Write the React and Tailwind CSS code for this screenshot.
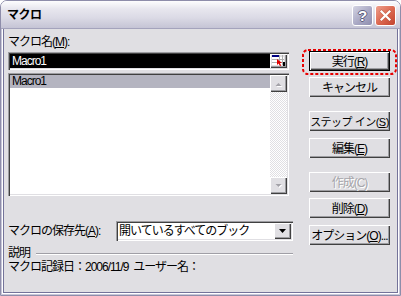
import React from "react";

const raised =
  "shadow-[inset_1px_1px_0_#ffffff,inset_-1px_-1px_0_#404040,inset_-2px_-2px_0_#9d9da1]";
const sunken =
  "shadow-[inset_1px_1px_0_#9d9da1,inset_2px_2px_0_#404040,inset_-1px_-1px_0_#ffffff,inset_-2px_-2px_0_#e0dfe3]";

function Btn({ children, disabled, className = "" }) {
  return (
    <div
      className={`h-[20px] w-[81px] flex items-center justify-center whitespace-nowrap bg-[#e0dfe3] ${raised} ${className} ${
        disabled ? "text-[#a6a5aa] [text-shadow:1px_1px_0_#ffffff]" : "text-black"
      }`}
    >
      <span className="leading-[14px] pt-[1px] whitespace-pre">{children}</span>
    </div>
  );
}

function U({ children }) {
  return <span className="underline underline-offset-[1px] decoration-1">{children}</span>;
}

function ArrowBtn({ dir }) {
  return (
    <div className={`w-[17px] h-[17px] bg-[#e0dfe3] flex items-center justify-center ${raised}`}>
      <svg width="9" height="6" viewBox="0 0 9 6">
        {dir === "up" ? (
          <>
            <polygon points="1.5,5 4.5,2 7.5,5" fill="#ffffff" transform="translate(1,1)" />
            <polygon points="1.5,5 4.5,2 7.5,5" fill="#a3a2a8" />
          </>
        ) : (
          <>
            <polygon points="1.5,1 4.5,4 7.5,1" fill="#ffffff" transform="translate(1,1)" />
            <polygon points="1.5,1 4.5,4 7.5,1" fill="#a3a2a8" />
          </>
        )}
      </svg>
    </div>
  );
}

export default function App() {
  return (
    <div className="w-[401px] h-[296px] bg-white">
      <div className="w-[401px] h-[296px] flex flex-col rounded-t-[7px] overflow-hidden border border-[#8e8daa] text-[12px] tracking-[-1px] font-['Liberation_Sans','Noto_Sans_CJK_JP',sans-serif] text-black">
        {/* Title bar */}
        <div className="h-[28px] shrink-0 flex items-center pl-[6px] pr-[4px] bg-[linear-gradient(#fdfdfe,#e7e6ee_30%,#dcdbe6_60%,#c5c4d5)] border-b border-[#a4a3bc]">
          <span className="font-bold text-[12px] tracking-[-0.5px] leading-[14px] pt-[1px]">マクロ</span>
          <div className="ml-auto flex gap-[2px] pt-[1px]">
            <div className="w-[21px] h-[21px] rounded-[3px] border border-white bg-[linear-gradient(135deg,#d4d4e3,#a9a8c4_55%,#8f8eaf)] flex items-center justify-center">
              <span className="font-bold text-[15px] leading-none text-white tracking-normal font-['Liberation_Sans',sans-serif] [text-shadow:1px_0_0_#5d5c7c,-1px_0_0_#5d5c7c,0_1px_0_#5d5c7c,0_-1px_0_#5d5c7c]">
                ?
              </span>
            </div>
            <div className="w-[21px] h-[21px] rounded-[3px] border border-white bg-[linear-gradient(135deg,#eea08d,#dd6a52_50%,#c2432e)] flex items-center justify-center">
              <svg width="13" height="13" viewBox="0 0 13 13">
                <path d="M2.5 2.5 L10.5 10.5 M10.5 2.5 L2.5 10.5" stroke="#8a3a2e" strokeWidth="3.2" strokeLinecap="square" opacity="0.35" />
                <path d="M2.5 2.5 L10.5 10.5 M10.5 2.5 L2.5 10.5" stroke="#ffffff" strokeWidth="2.2" strokeLinecap="square" />
              </svg>
            </div>
          </div>
        </div>

        {/* Body frame */}
        <div className="flex-1 flex border-x border-b border-[#c8c7d9]">
          <div className="flex-1 flex border-x border-b border-white">
            <div className="flex-1 flex border-x border-b border-[#74739a] bg-[#e0dfe3] pl-[4px]">
              {/* Left column */}
              <div className="w-[285px] flex flex-col pt-[6px]">
                <div className="leading-[14px] h-[14px]">
                  マクロ名(<U>M</U>):
                </div>
                {/* Text box */}
                <div className={`mt-[3px] w-[281px] h-[18px] bg-white p-[2px] flex ${sunken}`}>
                  <div className="w-[260px] h-[14px] bg-black text-white leading-[14px] pl-[2px]">Macro1</div>
                  <div className={`ml-auto w-[17px] h-[14px] bg-[#e0dfe3] flex items-center justify-center ${raised}`}>
                    <svg width="13" height="11" viewBox="0 0 13 11" className="mb-[1px]">
                      <rect x="0" y="0" width="7" height="2" fill="#000080" />
                      <rect x="0" y="2" width="12" height="8" fill="#ffffff" />
                      <path d="M0 4.5h12M0 7.5h12M7.5 0v10M10.5 0v10" stroke="#b0b0b0" strokeWidth="1" />
                      <polygon points="5,4 5,10 6.6,8.6 8,11 9.2,10.4 7.9,8 10,8" fill="#e00000" />
                      <rect x="11" y="7" width="2" height="4" fill="#000000" />
                    </svg>
                  </div>
                </div>
                {/* List box */}
                <div className={`mt-[3px] w-[281px] h-[123px] bg-white p-[2px] flex ${sunken}`}>
                  <div className="flex-1">
                    <div className="h-[13px] bg-[#b4b4c0] leading-[13px] pl-[2px]">Macro1</div>
                  </div>
                  <div className="w-[17px] flex flex-col">
                    <ArrowBtn dir="up" />
                    <div className="flex-1 bg-[conic-gradient(#ffffff_25%,#e0dfe3_0_50%,#ffffff_0_75%,#e0dfe3_0)] bg-[length:2px_2px]" />
                    <ArrowBtn dir="down" />
                  </div>
                </div>
                {/* Save location */}
                <div className="mt-[25px] flex items-center">
                  <div className="w-[108px] leading-[14px] whitespace-nowrap">
                    マクロの保存先(<U>A</U>):
                  </div>
                  <div className={`w-[177px] h-[20px] bg-white p-[2px] flex items-center ${sunken}`}>
                    <div className="flex-1 leading-[14px] pl-[1px] whitespace-nowrap">開いているすべてのブック</div>
                    <div className={`w-[17px] h-[16px] bg-[#e0dfe3] flex items-center justify-center ${raised}`}>
                      <svg width="7" height="4" viewBox="0 0 7 4">
                        <polygon points="0,0 7,0 3.5,4" fill="#000000" />
                      </svg>
                    </div>
                  </div>
                </div>
                {/* Description */}
                <div className="mt-[5px] flex items-center h-[14px]">
                  <span className="leading-[14px]">説明</span>
                  <div className="ml-[6px] flex-1 h-[2px] border-t border-[#a09fa6] border-b border-b-white mt-[1px]" />
                </div>
                <div className="leading-[14px] whitespace-pre">マクロ記録日：2006/11/9  ユーザー名：</div>
              </div>

              {/* Right column */}
              <div className="ml-[16px] w-[81px] flex flex-col pt-[22px]">
                <div className="relative">
                  <svg className="absolute left-[-7px] top-[-2px]" width="95" height="26" viewBox="0 0 95 26">
                    <rect x="1" y="1" width="93" height="24" rx="5" ry="5" fill="none" stroke="#e80000" strokeWidth="2" strokeDasharray="3 2" />
                  </svg>
                  <div className="border border-black">
                    <div className={`h-[18px] w-[79px] flex items-center justify-center bg-[#e0dfe3] ${raised}`}>
                      <span className="leading-[14px] pt-[1px]">
                        実行(<U>R</U>)
                      </span>
                    </div>
                  </div>
                </div>
                <Btn className="mt-[6px]">キャンセル</Btn>
                <Btn className="mt-[14px] text-[11px] tracking-[-0.5px]">
                  ステップ イン(<U>S</U>)
                </Btn>
                <Btn className="mt-[7px]">
                  編集(<U>E</U>)
                </Btn>
                <Btn className="mt-[14px]" disabled>
                  作成(C)
                </Btn>
                <Btn className="mt-[6px]">
                  削除(<U>D</U>)
                </Btn>
                <Btn className="mt-[7px]">
                  オプション(<U>O</U>)...
                </Btn>
              </div>
            </div>
          </div>
        </div>
      </div>
    </div>
  );
}
